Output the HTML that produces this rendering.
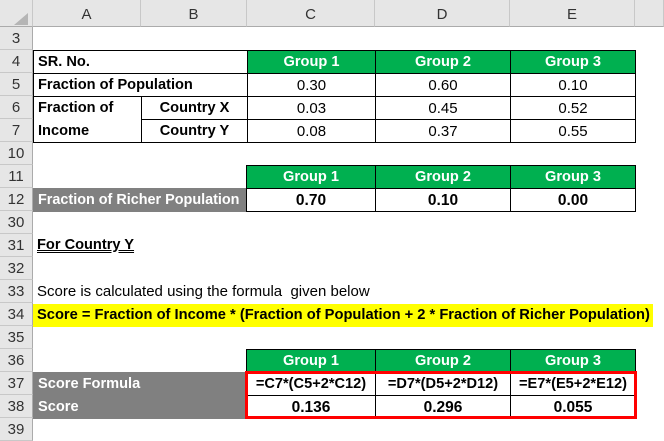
<!DOCTYPE html>
<html><head><meta charset="utf-8"><style>
*{margin:0;padding:0;box-sizing:border-box}
body{width:664px;height:439px;overflow:hidden;background:#fff;font-family:"Liberation Sans",Arial,sans-serif;font-size:14px;color:#000;position:relative}
.a{position:absolute}
.ch{position:absolute;top:0;height:27px;background:#e6e6e6;border-right:1px solid #c8c8c8;border-bottom:1px solid #ababab;text-align:center;line-height:30px;font-size:15px;color:#333}
.rh{position:absolute;left:0;width:33px;background:#e6e6e6;border-bottom:1px solid #c8c8c8;border-right:1px solid #ababab;text-align:center;font-size:15px;color:#333;height:23px;line-height:23px}
.c{position:absolute;height:24px;line-height:23px;border:1px solid #000;white-space:nowrap;overflow:hidden;font-weight:bold;font-size:14.6px}
.g{background:#00b050;color:#fff;text-align:center}
.gr{background:#808080;color:#fff;padding-left:4px}
.ctr{text-align:center}
.n{font-weight:normal;font-size:15px}
</style></head><body>
<div class="ch" style="left:0;width:33px"><div class="a" style="left:14px;top:13px;width:0;height:0;border-left:14px solid transparent;border-bottom:12px solid #b5b5b5"></div></div>
<div class="ch" style="left:33px;width:108px">A</div>
<div class="ch" style="left:141px;width:106px">B</div>
<div class="ch" style="left:247px;width:128px">C</div>
<div class="ch" style="left:375px;width:135px">D</div>
<div class="ch" style="left:510px;width:125px">E</div>
<div class="ch" style="left:635px;width:29px"></div>

<div class="rh" style="top:27px">3</div>
<div class="rh" style="top:50px">4</div>
<div class="rh" style="top:73px">5</div>
<div class="rh" style="top:96px">6</div>
<div class="rh" style="top:119px">7</div>
<div class="rh" style="top:142px">10</div>
<div class="rh" style="top:165px">11</div>
<div class="rh" style="top:188px">12</div>
<div class="rh" style="top:211px">30</div>
<div class="rh" style="top:234px">31</div>
<div class="rh" style="top:257px">32</div>
<div class="rh" style="top:280px">33</div>
<div class="rh" style="top:303px">34</div>
<div class="rh" style="top:326px">35</div>
<div class="rh" style="top:349px">36</div>
<div class="rh" style="top:372px">37</div>
<div class="rh" style="top:395px">38</div>
<div class="rh" style="top:418px">39</div>

<div class="c" style="left:33px;top:50px;width:215px;padding-left:4px">SR. No.</div>
<div class="c g" style="left:247px;top:50px;width:129px">Group 1</div>
<div class="c g" style="left:375px;top:50px;width:136px">Group 2</div>
<div class="c g" style="left:510px;top:50px;width:126px">Group 3</div>
<div class="c" style="left:33px;top:73px;width:215px;padding-left:4px">Fraction of Population</div>
<div class="c ctr n" style="left:247px;top:73px;width:129px">0.30</div>
<div class="c ctr n" style="left:375px;top:73px;width:136px">0.60</div>
<div class="c ctr n" style="left:510px;top:73px;width:126px">0.10</div>
<div class="c" style="left:33px;top:96px;width:109px;height:47px;padding-left:4px;line-height:23px;white-space:normal">Fraction of<br>Income</div>
<div class="c ctr" style="left:141px;top:96px;width:107px">Country X</div>
<div class="c ctr" style="left:141px;top:119px;width:107px">Country Y</div>
<div class="c ctr n" style="left:247px;top:96px;width:129px">0.03</div>
<div class="c ctr n" style="left:375px;top:96px;width:136px">0.45</div>
<div class="c ctr n" style="left:510px;top:96px;width:126px">0.52</div>
<div class="c ctr n" style="left:247px;top:119px;width:129px">0.08</div>
<div class="c ctr n" style="left:375px;top:119px;width:136px">0.37</div>
<div class="c ctr n" style="left:510px;top:119px;width:126px">0.55</div>

<div class="c g" style="left:246px;top:165px;width:130px">Group 1</div>
<div class="c g" style="left:375px;top:165px;width:136px">Group 2</div>
<div class="c g" style="left:510px;top:165px;width:126px">Group 3</div>
<div class="c gr" style="left:33px;top:188px;width:214px;border-color:#808080;font-size:14.4px">Fraction of Richer Population</div>
<div class="c ctr" style="left:246px;top:188px;width:130px;font-size:15.5px">0.70</div>
<div class="c ctr" style="left:375px;top:188px;width:136px;font-size:15.5px">0.10</div>
<div class="c ctr" style="left:510px;top:188px;width:126px;font-size:15.5px">0.00</div>

<div class="a" style="left:37px;top:234px;line-height:23px;font-weight:bold;font-size:14.6px;text-decoration:underline double">For Country Y</div>
<div class="a" style="left:37px;top:280px;line-height:24px;font-size:15px">Score is calculated using the formula&nbsp; given below</div>
<div class="a" style="left:33px;top:304px;width:620px;height:23px;background:#ffff00;line-height:23px;padding-left:4px;font-weight:bold;font-size:14.7px;white-space:nowrap">Score = Fraction of Income * (Fraction of Population + 2 * Fraction of Richer Population)</div>

<div class="c g" style="left:246px;top:349px;width:130px">Group 1</div>
<div class="c g" style="left:375px;top:349px;width:136px">Group 2</div>
<div class="c g" style="left:510px;top:349px;width:126px">Group 3</div>
<div class="c gr" style="left:33px;top:372px;width:214px;border-color:#808080;border-bottom-color:#000">Score Formula</div>
<div class="c gr" style="left:33px;top:395px;width:214px;border-color:#808080">Score</div>
<div class="c ctr" style="left:246px;top:372px;width:130px;font-size:14.6px">=C7*(C5+2*C12)</div>
<div class="c ctr" style="left:375px;top:372px;width:136px;font-size:14.6px">=D7*(D5+2*D12)</div>
<div class="c ctr" style="left:510px;top:372px;width:126px;font-size:14.6px">=E7*(E5+2*E12)</div>
<div class="c ctr" style="left:246px;top:395px;width:130px;font-size:15.5px">0.136</div>
<div class="c ctr" style="left:375px;top:395px;width:136px;font-size:15.5px">0.296</div>
<div class="c ctr" style="left:510px;top:395px;width:126px;font-size:15.5px">0.055</div>
<div class="a" style="left:245px;top:371px;width:392px;height:48px;border:3px solid #ff0000"></div>
</body></html>
